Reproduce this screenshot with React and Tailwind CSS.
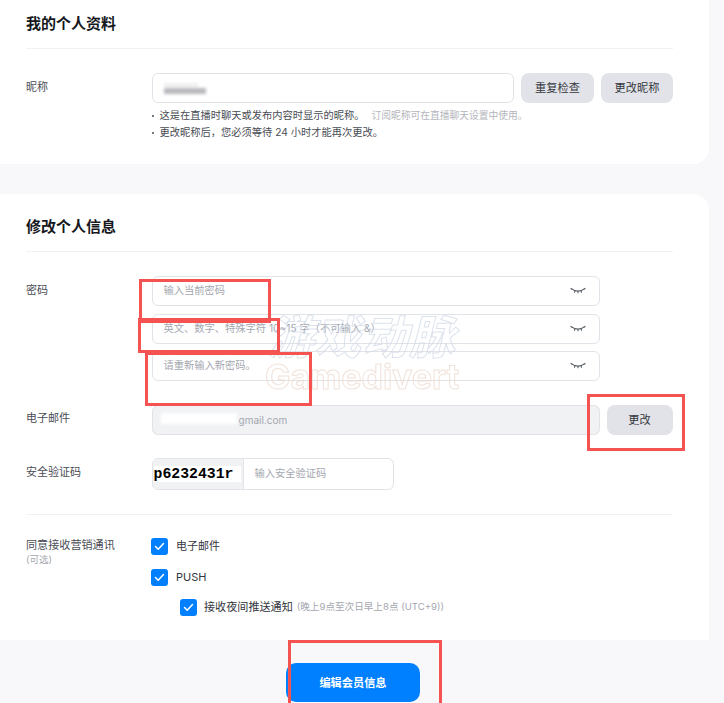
import React from "react";

const EyeClosed = () => (
  <svg width="16" height="10" viewBox="0 0 16 10" fill="none" stroke="#5a5e67" strokeWidth="1.1" strokeLinecap="round" className="shrink-0">
    <path d="M2 3.2C5 5.8 11 5.8 14 3.2" />
    <path d="M2 3.2.9 2.4M14 3.2 15.1 2.4M5 5 4.5 6.2M8 5.5V6.8M11 5 11.5 6.2" />
  </svg>
);

const Check = ({ className = "" }) => (
  <span className={`flex h-[17px] w-[17px] shrink-0 items-center justify-center rounded-[3px] bg-[#0080ff] ${className}`}>
    <svg width="11" height="9" viewBox="0 0 11 9" fill="none" stroke="#fff" strokeWidth="1.5" strokeLinecap="round" strokeLinejoin="round">
      <path d="M1.5 4.5 4.2 7.2 9.5 1.5" />
    </svg>
  </span>
);

const PasswordInput = ({ placeholder }) => (
  <div className="flex h-[30px] w-[448px] items-center justify-between rounded-md border border-[#e2e3e8] pl-[11px] pr-[13px]">
    <span className="text-[10.25px] text-[#a4a7af]">{placeholder}</span>
    <EyeClosed />
  </div>
);

const GrayButton = ({ children, className = "" }) => (
  <button className={`h-[30px] rounded-lg bg-[#e2e3e8] text-[11.2px] text-[#33363d] ${className}`}>
    {children}
  </button>
);

const RedBox = ({ className }) => (
  <div className={`pointer-events-none absolute border-[3px] border-[#f55252] ${className}`} />
);

const Hint = ({ children }) => (
  <li className="flex items-center">
    <span className="mr-[6px] h-[2px] w-[2px] rounded-full bg-[#494c54]" />
    {children}
  </li>
);

export default function App() {
  return (
    <div
      className="relative h-[703px] w-[724px] overflow-hidden bg-[#f8f8fa] text-[#33363d]"
      style={{ fontFamily: 'Inter, "Noto Sans CJK SC", sans-serif' }}
    >
      {/* 我的个人资料 */}
      <section className="h-[164px] w-[709px] rounded-br-2xl bg-white pl-[26px] pr-9">
        <h2 className="flex h-[49px] items-center border-b border-[#f1f1f4] text-[15px] font-bold text-[#16181d]">
          我的个人资料
        </h2>
        <div className="mt-[24px] flex">
          <div className="w-[125.5px] pt-[6px] text-[11px] text-[#494c54]">昵称</div>
          <div className="flex-1">
            <div className="flex gap-[7px]">
              <div className="flex h-[30px] w-[362.5px] flex-col justify-center rounded-md border border-[#e2e3e8] pl-[11px]">
                <span className="h-[5px] w-[34px] bg-[#f0f0f2] blur-[1.5px]" />
                <span className="h-[6px] w-[42px] bg-[#b9b9be] blur-[1.5px]" />
              </div>
              <GrayButton className="w-[73px]">重复检查</GrayButton>
              <GrayButton className="w-[72px]">更改昵称</GrayButton>
            </div>
            <ul className="mt-[4px] text-[10.25px] leading-[17px] text-[#494c54]">
              <Hint>
                这是在直播时聊天或发布内容时显示的昵称。
                <span className="ml-[7px] text-[9.75px] text-[#b4b6bc]">订阅昵称可在直播聊天设置中使用。</span>
              </Hint>
              <Hint>更改昵称后，您必须等待 24 小时才能再次更改。</Hint>
            </ul>
          </div>
        </div>
      </section>

      {/* 修改个人信息 */}
      <section className="mt-[30px] h-[446px] w-[709px] rounded-tr-2xl bg-white pl-[26px] pr-9">
        <h2 className="flex h-[58px] items-center border-b border-[#f1f1f4] pt-[10px] text-[15px] font-bold text-[#16181d]">
          修改个人信息
        </h2>

        <div className="mt-[24px] flex">
          <div className="w-[125.5px] pt-[6px] text-[11px] text-[#494c54]">密码</div>
          <div className="flex flex-col gap-[7.5px]">
            <PasswordInput placeholder="输入当前密码" />
            <PasswordInput placeholder="英文、数字、特殊字符 10~15 字（不可输入 &）" />
            <PasswordInput placeholder="请重新输入新密码。" />
          </div>
        </div>

        <div className="mt-[24px] flex items-center">
          <div className="w-[125.5px] pb-[3px] text-[11px] text-[#494c54]">电子邮件</div>
          <div className="relative flex h-[30px] w-[448px] items-center rounded-md border border-[#e2e3e8] bg-[#f1f2f4] pl-[86px] text-[10px] text-[#a4a7af]">
            gmail.com
            <span className="absolute left-[8px] top-[7px] h-[11px] w-[76px] bg-white blur-[1.5px]" />
          </div>
          <GrayButton className="ml-[7px] w-[66px]">更改</GrayButton>
        </div>

        <div className="mt-[23px] flex items-center">
          <div className="w-[125.5px] pb-[4px] text-[11px] text-[#494c54]">安全验证码</div>
          <div className="flex h-[32px] w-[242px] overflow-hidden rounded-md border border-[#e2e3e8]">
            <div className="flex w-[91px] items-center border-r border-[#e2e3e8] bg-[#f1f2f4] pl-[1px]">
              <span
                className="flex h-[16px] w-[87px] items-center bg-white text-[14.8px] font-bold text-black"
                style={{ fontFamily: '"Liberation Mono", monospace' }}
              >
                p6232431r
              </span>
            </div>
            <span className="flex items-center pl-[11px] text-[10.25px] text-[#a4a7af]">输入安全验证码</span>
          </div>
        </div>

        <div className="mt-[24px] flex border-t border-[#f1f1f4] pt-[23px]">
          <div className="w-[125px] text-[11.1px] leading-[15px] text-[#494c54]">
            同意接收营销通讯
            <div className="text-[9.5px] leading-[13px] text-[#a4a7af]">(可选)</div>
          </div>
          <div className="flex flex-col gap-[13.5px]">
            <label className="flex items-center gap-[8px] text-[11px] text-[#33363d]">
              <Check />
              电子邮件
            </label>
            <label className="flex items-center gap-[8px] text-[11px] text-[#33363d]">
              <Check />
              PUSH
            </label>
            <label className="ml-[29px] flex items-center gap-[7px] text-[11.1px] text-[#33363d]">
              <Check />
              接收夜间推送通知
              <span className="-ml-[3px] text-[9.6px] text-[#a4a7af]">(晚上9点至次日早上8点 (UTC+9))</span>
            </label>
          </div>
        </div>
      </section>

      <div className="ml-[286px] mt-[23px]">
        <button className="h-[39px] w-[134px] rounded-[10px] bg-[#0080ff] pt-[2px] text-[11.2px] font-bold text-white">
          编辑会员信息
        </button>
      </div>

      {/* watermark */}
      <div className="pointer-events-none absolute left-[262px] top-[312px] flex w-[200px] flex-col items-center opacity-75">
        <span className="text-[46px] font-bold italic leading-[50px] tracking-[1px] text-transparent [-webkit-text-stroke:1px_#cfd9e6]">
          游戏动脉
        </span>
        <span className="text-[34px] font-bold leading-[30px] text-transparent [-webkit-text-stroke:1px_#ecd9cd]">
          Gamedivert
        </span>
      </div>

      {/* red annotations */}
      <RedBox className="left-[139px] top-[279px] h-[44px] w-[132px]" />
      <RedBox className="left-[138px] top-[318px] h-[35px] w-[142px]" />
      <RedBox className="left-[145px] top-[352px] h-[54px] w-[167px]" />
      <RedBox className="left-[587px] top-[394px] h-[57px] w-[98px]" />
      <RedBox className="left-[288px] top-[640px] h-[70px] w-[154px]" />
    </div>
  );
}
